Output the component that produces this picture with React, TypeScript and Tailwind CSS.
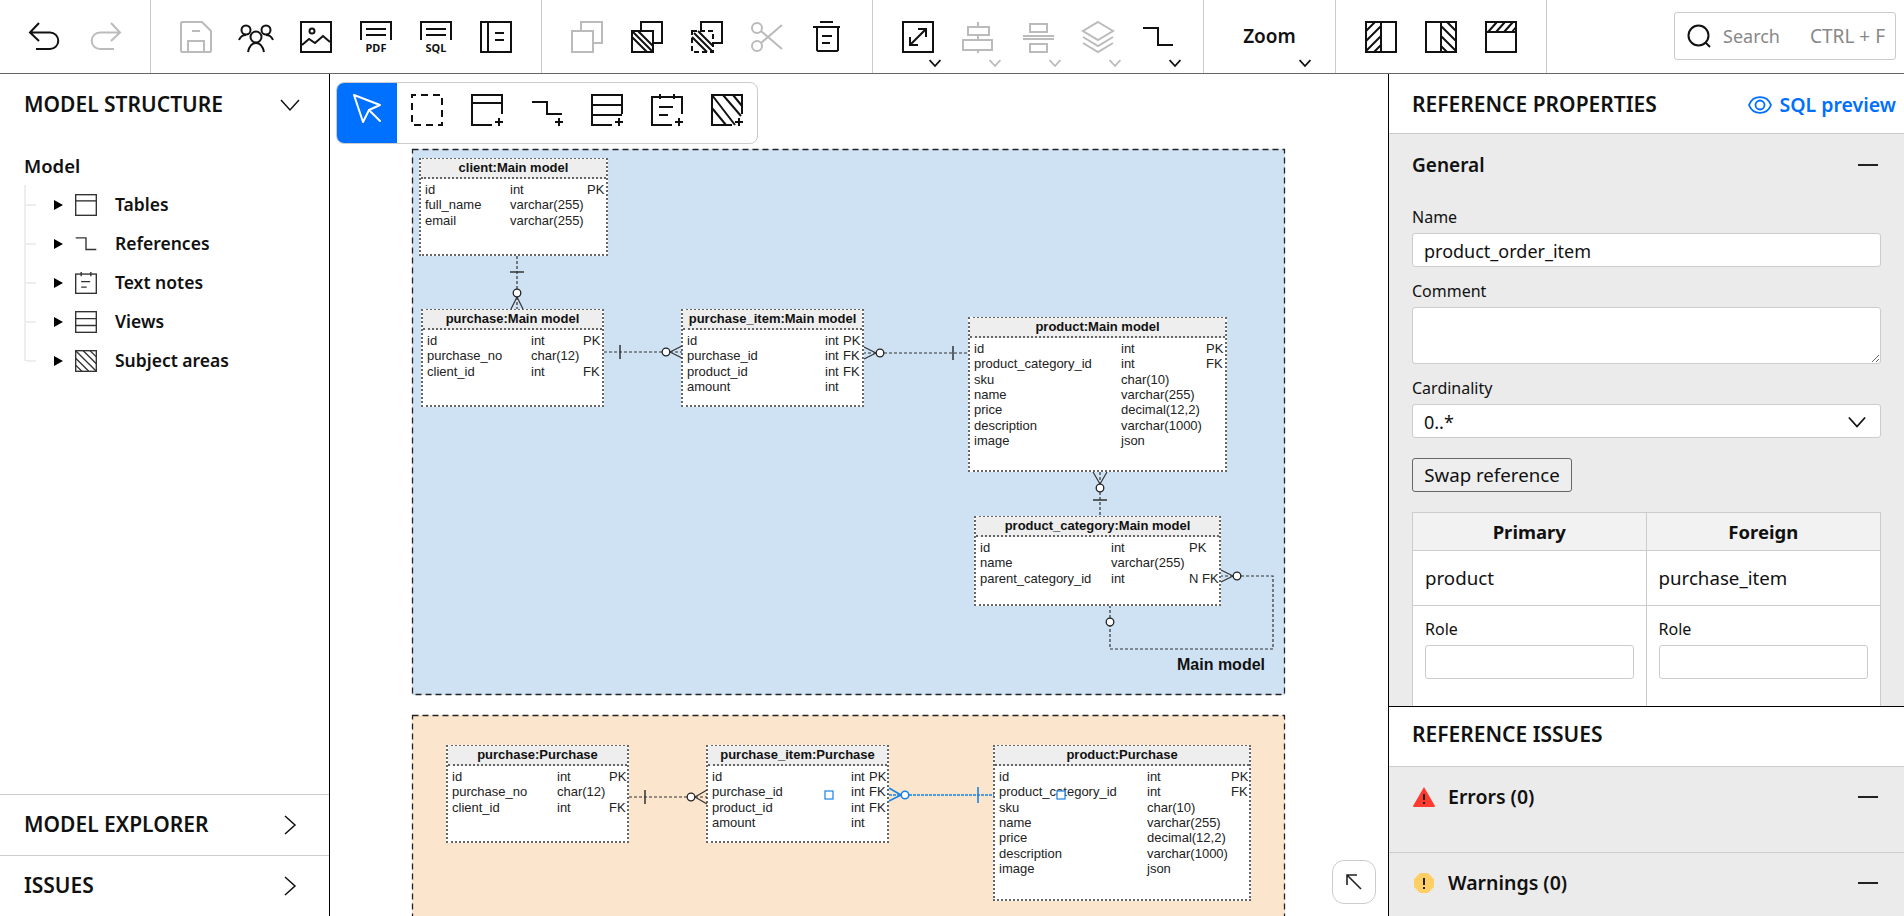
import type { ReactNode } from "react";

const Ico = ({ children, className = "" }: { children: ReactNode; className?: string }) => (
  <svg viewBox="0 0 32 32" fill="none" stroke="currentColor" strokeWidth={2} className={`w-8 h-8 shrink-0 overflow-visible ${className}`}>
    {children}
  </svg>
);

const Chevron = ({ className = "", dir = "down", w = 2 }: { className?: string; dir?: "down" | "right"; w?: number }) => (
  <svg viewBox="0 0 20 20" fill="none" stroke="currentColor" strokeWidth={w} className={className}>
    <path d={dir === "down" ? "M1 5 L10 15 L19 5" : "M5 1 L15 10 L5 19"} />
  </svg>
);

const Hatch = ({ d }: { d: string }) => <path d={d} />;

const Undo = () => <path d="M10 2 L1 11.5 L10 20 M1 11.5 H21 A8.2 8.2 0 0 1 21 28 H7" />;
const Redo = () => <path d="M22 2 L31 11.5 L22 20 M31 11.5 H11 A8.2 8.2 0 0 0 11 28 H25" />;
const SaveI = () => (
  <>
    <path d="M2 1 H22 L31 10 V30 L30 31 H2 L1 30 V2 Z" />
    <path d="M12 10 H20 M8 31 V20 H24 V31" />
  </>
);
const People = () => (
  <>
    <circle cx="6" cy="9" r="4.5" />
    <circle cx="26" cy="9" r="4.5" />
    <path d="M-1 19 Q1 14 6 14 M33 19 Q31 14 26 14" />
    <circle cx="16" cy="16" r="5.5" fill="white" />
    <path d="M8 31 Q10 22 16 22 Q22 22 24 31" />
  </>
);
const ImageI = () => (
  <>
    <rect x="1" y="1" width="30" height="30" />
    <circle cx="12" cy="10" r="2.5" />
    <path d="M2 24 L9 18 L15 22 L23 15 L30 21" />
  </>
);
const DocText = ({ label }: { label: string }) => (
  <>
    <path d="M1 19 V1 H31 V19 M6 8 H26 M6 14 H26" />
    <text x="16" y="31" textAnchor="middle" fontSize="11" fontWeight="700" fill="currentColor" stroke="none" className="font-['Noto_Sans',sans-serif]">
      {label}
    </text>
  </>
);
const Sidebar = () => (
  <>
    <rect x="1" y="1" width="30" height="30" />
    <path d="M8 1 V31 M15 12 H24 M15 19 H24" />
  </>
);
const Copy = () => (
  <>
    <rect x="1" y="10" width="21" height="21" />
    <path d="M10 10 V1 H31 V22 H22" />
  </>
);
const CopyArea = () => (
  <>
    <rect x="1" y="10" width="21" height="21" />
    <path d="M10 10 V1 H31 V22 H22" />
    <Hatch d="M1 16 L16 31 M1 10 L22 31 M7 10 L22 25" />
  </>
);
const CopyAreaDashed = () => (
  <>
    <rect x="1" y="10" width="21" height="21" strokeDasharray="5 3" />
    <path d="M10 10 V1 H31 V22 H22" />
    <Hatch d="M1 16 L16 31 M3 12 L21 30 M7 10 L22 25" />
  </>
);
const Scissors = () => (
  <>
    <circle cx="6" cy="7" r="5" />
    <circle cx="6" cy="25" r="5" />
    <path d="M10 10 L31 28 M10 22 L31 4" />
  </>
);
const Trash = () => (
  <path d="M9 1 H22 M2 6 H29 M6 6 V29 L7 30 H26 L27 29 V6 M11 15 H21 M11 22 H19" />
);
const Resize = () => (
  <>
    <rect x="1" y="1" width="30" height="30" />
    <path d="M8 24 L24 8 M16 8 H24 V16 M8 16 V24 H16" />
  </>
);
const AlignCenter = () => (
  <>
    <rect x="6" y="6" width="21" height="8" />
    <rect x="1" y="19" width="29" height="10" />
    <path d="M16 1 V6 M16 14 V19 M16 29 V32" />
  </>
);
const AlignMiddle = () => (
  <>
    <rect x="8" y="3" width="17" height="8" />
    <rect x="8" y="23" width="17" height="8" />
    <path d="M1 15 H32 M1 18 H32" />
  </>
);
const Layers = () => <path d="M16 1 L31 10 L16 19 L1 10 Z M1 16 L16 25 L31 16 M1 22 L16 31 L31 22" />;
const RefLine = () => <path d="M1 7 H16 V24 H31" />;
const LeftHatch = () => (
  <>
    <rect x="1" y="1" width="30" height="30" />
    <path d="M16 1 V31 M1 10 L10 1 M1 20 L16 5 M1 30 L16 15 M9 31 L16 24" />
  </>
);
const RightHatch = () => (
  <>
    <rect x="1" y="1" width="30" height="30" />
    <path d="M16 1 V31 M22 1 L31 10 M16 5 L31 20 M16 15 L31 30 M16 25 L22 31" />
  </>
);
const TopHatch = () => (
  <>
    <rect x="1" y="1" width="30" height="30" />
    <path d="M1 11 H31 M3 11 L12 1 M11 11 L20 1 M19 11 L28 1 M27 11 L31 6" />
  </>
);
const Plus = () => <path d="M28 24 V32 M24 28 H32" />;

const Cursor = () => (
  <>
    <path d="M3 1 L29 11 L18 16 L12 28 Z" strokeLinejoin="round" />
    <path d="M18 16 L29 27" strokeLinecap="round" />
  </>
);
const DashRect = () => <rect x="1" y="1" width="30" height="30" strokeDasharray="7 5" strokeDashoffset="3" />;
const TableAdd = () => (
  <>
    <path d="M31 20 V1 H1 V31 H21 M1 9 H31" />
    <Plus />
  </>
);
const RefAdd = () => (
  <>
    <path d="M1 8 H16 V20 H31" />
    <Plus />
  </>
);
const ViewAdd = () => (
  <>
    <path d="M31 20 V1 H1 V31 H21 M1 11 H31 M1 21 H31" />
    <Plus />
  </>
);
const NoteAdd = () => (
  <>
    <path d="M31 20 V3 H1 V31 H21 M9 0 V5 M23 0 V5 M8 13 H22 M8 21 H17" />
    <Plus />
  </>
);
const AreaAdd = () => (
  <>
    <path d="M31 20 V1 H1 V31 H21 M1 1 L24 31 M12 1 L30 22 M22 1 L31 12 M1 14 L15 31" />
    <Plus />
  </>
);

const TableI = () => (
  <>
    <rect x="1" y="1" width="30" height="30" />
    <path d="M1 10 H31" />
  </>
);
const NoteI = () => (
  <>
    <rect x="1" y="3" width="30" height="28" />
    <path d="M9 0 V6 M23 0 V6 M9 14 H22 M9 22 H17" />
  </>
);
const ViewI = () => (
  <>
    <rect x="1" y="1" width="30" height="30" />
    <path d="M1 11 H31 M1 21 H31" />
  </>
);
const AreaI = () => (
  <>
    <rect x="1" y="1" width="30" height="30" />
    <path d="M1 1 L31 31 M12 1 L31 20 M1 12 L20 31 M22 1 L31 10 M1 22 L10 31" />
  </>
);

const ToolBtn = ({ children, off, menu }: { children: ReactNode; off?: boolean; menu?: boolean }) => (
  <div className={`relative w-[60px] h-[73px] flex justify-center items-center ${off ? "text-[#bbb]" : "text-[#111]"}`}>
    {children}
    {menu && <Chevron className="absolute left-[41px] top-[57px] w-[12px] h-[12px]" w={3} />}
  </div>
);

const ToolGroup = ({ children }: { children: ReactNode }) => (
  <div className="flex px-[15px] border-r border-[#ccc] h-[73px]">{children}</div>
);

const Header = () => (
  <header className="h-[74px] shrink-0 flex border-b border-[#666] bg-white">
    <ToolGroup>
      <ToolBtn><Ico><Undo /></Ico></ToolBtn>
      <ToolBtn off><Ico><Redo /></Ico></ToolBtn>
    </ToolGroup>
    <ToolGroup>
      <ToolBtn off><Ico><SaveI /></Ico></ToolBtn>
      <ToolBtn><Ico><People /></Ico></ToolBtn>
      <ToolBtn><Ico><ImageI /></Ico></ToolBtn>
      <ToolBtn><Ico><DocText label="PDF" /></Ico></ToolBtn>
      <ToolBtn><Ico><DocText label="SQL" /></Ico></ToolBtn>
      <ToolBtn><Ico><Sidebar /></Ico></ToolBtn>
    </ToolGroup>
    <ToolGroup>
      <ToolBtn off><Ico><Copy /></Ico></ToolBtn>
      <ToolBtn><Ico><CopyArea /></Ico></ToolBtn>
      <ToolBtn><Ico><CopyAreaDashed /></Ico></ToolBtn>
      <ToolBtn off><Ico><Scissors /></Ico></ToolBtn>
      <ToolBtn><Ico><Trash /></Ico></ToolBtn>
    </ToolGroup>
    <ToolGroup>
      <ToolBtn menu><Ico><Resize /></Ico></ToolBtn>
      <ToolBtn off menu><Ico><AlignCenter /></Ico></ToolBtn>
      <ToolBtn off menu><Ico><AlignMiddle /></Ico></ToolBtn>
      <ToolBtn off menu><Ico><Layers /></Ico></ToolBtn>
      <ToolBtn menu><Ico><RefLine /></Ico></ToolBtn>
    </ToolGroup>
    <div className="relative w-[132px] h-[73px] border-r border-[#ccc] flex justify-center items-center text-[19px] font-semibold text-[#111]">
      Zoom
      <Chevron className="absolute left-[95px] top-[57px] w-[12px] h-[12px]" w={3} />
    </div>
    <ToolGroup>
      <ToolBtn><Ico><LeftHatch /></Ico></ToolBtn>
      <ToolBtn><Ico><RightHatch /></Ico></ToolBtn>
      <ToolBtn><Ico><TopHatch /></Ico></ToolBtn>
    </ToolGroup>
    <div className="ml-auto mr-2 mt-3 w-[222px] h-[48px] border border-[#ccc] rounded-[3px] flex items-center pl-[12px] pr-[10px] text-[#888]">
      <svg viewBox="0 0 24 24" fill="none" stroke="#111" strokeWidth={2} className="w-6 h-6 shrink-0">
        <circle cx="11.5" cy="11.5" r="10" />
        <path d="M18.5 18.5 L23 23" />
      </svg>
      <span className="ml-[12px] text-[18px]">Search</span>
      <span className="ml-auto text-[19px]">CTRL + F</span>
    </div>
  </header>
);

const treeItems: { label: string; icon: ReactNode }[] = [
  { label: "Tables", icon: <TableI /> },
  { label: "References", icon: <RefLine /> },
  { label: "Text notes", icon: <NoteI /> },
  { label: "Views", icon: <ViewI /> },
  { label: "Subject areas", icon: <AreaI /> },
];

const LeftPanel = () => (
  <aside className="w-[330px] shrink-0 flex flex-col border-r border-black bg-white text-[#111]">
    <div className="h-[60px] shrink-0 flex items-center justify-between pl-[24px] pr-[29px] pt-[2px]">
      <span className="text-[21px] font-semibold">MODEL STRUCTURE</span>
      <Chevron className="w-[20px] h-[20px]" w={1.5} />
    </div>
    <div className="pl-[24px] mt-[20px] text-[18.5px] leading-[24px] font-semibold">Model</div>
    <ul className="ml-[24px] mt-[7px] h-[176px] border-l-2 border-[#eee]">
      {treeItems.map((item) => (
        <li key={item.label} className="h-[39px] flex items-center">
          <span className="w-[10px] h-[2px] bg-[#eee]" />
          <svg viewBox="0 0 9 10" className="ml-[18px] w-[9px] h-[10px] fill-black">
            <polygon points="0,0 9,5 0,10" />
          </svg>
          <svg viewBox="0 0 32 32" fill="none" stroke="#333" strokeWidth={2} className="ml-[12px] w-[22px] h-[22px] overflow-visible">
            {item.icon}
          </svg>
          <span className="ml-[18px] text-[17.5px] font-semibold">{item.label}</span>
        </li>
      ))}
    </ul>
    <div className="mt-auto">
      {["MODEL EXPLORER", "ISSUES"].map((name) => (
        <div key={name} className="h-[61px] border-t border-[#ccc] flex items-center justify-between pl-[24px] pr-[29px]">
          <span className="text-[21px] font-semibold">{name}</span>
          <Chevron dir="right" className="w-[20px] h-[20px]" w={1.5} />
        </div>
      ))}
    </div>
  </aside>
);

type Row = [string, string, string?];

type Tbl = {
  title: string;
  pos: string;
  cols: string;
  rows: Row[];
};

const productRows: Row[] = [
  ["id", "int", "PK"],
  ["product_category_id", "int", "FK"],
  ["sku", "char(10)"],
  ["name", "varchar(255)"],
  ["price", "decimal(12,2)"],
  ["description", "varchar(1000)"],
  ["image", "json"],
];
const purchaseRows: Row[] = [
  ["id", "int", "PK"],
  ["purchase_no", "char(12)"],
  ["client_id", "int", "FK"],
];
const itemRows: Row[] = [
  ["id", "int", "PK"],
  ["purchase_id", "int", "FK"],
  ["product_id", "int", "FK"],
  ["amount", "int"],
];

const tables: Tbl[] = [
  {
    title: "client:Main model",
    pos: "left-[89px] top-[84px] w-[189px] h-[98px]",
    cols: "grid-cols-[85px_77px_1fr]",
    rows: [
      ["id", "int", "PK"],
      ["full_name", "varchar(255)"],
      ["email", "varchar(255)"],
    ],
  },
  { title: "purchase:Main model", pos: "left-[91px] top-[235px] w-[183px] h-[98px]", cols: "grid-cols-[104px_52px_1fr]", rows: purchaseRows },
  { title: "purchase_item:Main model", pos: "left-[351px] top-[235px] w-[183px] h-[98px]", cols: "grid-cols-[138px_18px_1fr]", rows: itemRows },
  { title: "product:Main model", pos: "left-[638px] top-[243px] w-[259px] h-[155px]", cols: "grid-cols-[147px_85px_1fr]", rows: productRows },
  {
    title: "product_category:Main model",
    pos: "left-[644px] top-[442px] w-[247px] h-[90px]",
    cols: "grid-cols-[131px_78px_1fr]",
    rows: [
      ["id", "int", "PK"],
      ["name", "varchar(255)"],
      ["parent_category_id", "int", "N FK"],
    ],
  },
  { title: "purchase:Purchase", pos: "left-[116px] top-[671px] w-[183px] h-[98px]", cols: "grid-cols-[105px_52px_1fr]", rows: purchaseRows },
  { title: "purchase_item:Purchase", pos: "left-[376px] top-[671px] w-[183px] h-[98px]", cols: "grid-cols-[139px_18px_1fr]", rows: itemRows },
  { title: "product:Purchase", pos: "left-[663px] top-[671px] w-[258px] h-[156px]", cols: "grid-cols-[148px_84px_1fr]", rows: productRows },
];

const ErTable = ({ t }: { t: Tbl }) => (
  <div className={`absolute ${t.pos} bg-white border-2 border-dotted border-[#666]`}>
    <div className="h-[20px] -mt-px bg-[#eee] border-b-2 border-dotted border-[#666] text-center font-bold leading-[18px] text-[#111]">
      {t.title}
    </div>
    <div className="pt-[3px] pl-[4px] leading-[15.35px] text-[#222]">
      {t.rows.map((r) => (
        <div key={r[0]} className={`grid ${t.cols} whitespace-nowrap`}>
          <span>{r[0]}</span>
          <span>{r[1]}</span>
          <span>{r[2]}</span>
        </div>
      ))}
    </div>
  </div>
);

const Connectors = () => (
  <svg viewBox="330 74 1058 842" className="absolute inset-0 w-full h-full pointer-events-none" fill="none" stroke="#333" strokeWidth={1.2}>
    <rect x="412.5" y="149.5" width="872" height="545" stroke="#222" strokeWidth={1.3} strokeDasharray="6 4" />
    <rect x="412.5" y="715.5" width="872" height="300" stroke="#222" strokeWidth={1.3} strokeDasharray="6 4" />
    <g strokeDasharray="3 2">
      <path d="M517 256 V289" />
      <path d="M604 352 H662" />
      <path d="M884 353 H969" />
      <path d="M1100 472 V484 M1100 492 V516" />
      <path d="M1241 576 H1273 V649 H1110 V626 M1110 618 V606" />
      <path d="M629 797 H687" />
      <path d="M517 297 V309 M670 352 H682 M876 353 H864 M1233 576 H1221 M695 797 H707" />
    </g>
    <path d="M510 272 H524 M620 345 V359 M953 346 V360 M1093 500 H1107 M645 790 V804" strokeWidth={1.5} />
    <path d="M517 297 L511 309 M517 297 L523 309 M670 352 L682 346 M670 352 L682 358 M876 353 L864 347 M876 353 L864 359 M1100 484 L1093 472 M1100 484 L1107 472 M1233 576 L1221 570 M1233 576 L1221 582 M695 797 L707 790 M695 797 L707 804" />
    <g fill="white" stroke="#222" strokeWidth={1.3}>
      <circle cx="517" cy="293" r="3.8" />
      <circle cx="666" cy="352" r="3.8" />
      <circle cx="880" cy="353" r="3.8" />
      <circle cx="1100" cy="488" r="3.8" />
      <circle cx="1237" cy="576" r="3.8" />
      <circle cx="1110" cy="622" r="3.8" />
      <circle cx="691" cy="797" r="3.8" />
    </g>
    <g stroke="#1a82e6">
      <path d="M889 795 H994" strokeDasharray="3 1" strokeWidth={1.6} />
      <path d="M978 787 V803 M901 795 L889 788 M901 795 L889 801" strokeWidth={1.6} />
      <circle cx="905" cy="795" r="3.8" fill="white" strokeWidth={1.6} />
      <rect x="825" y="791" width="8" height="8" fill="white" strokeWidth={1.2} />
      <rect x="1057" y="791" width="8" height="8" fill="white" strokeWidth={1.2} />
    </g>
  </svg>
);

const paletteBtn = "w-[60px] h-[60px] flex justify-center pt-[11px] text-[#111]";

const Canvas = () => (
  <main className="relative flex-1 overflow-hidden bg-white font-['Liberation_Sans',Arial,sans-serif] text-[13px]">
    <div className="absolute left-[82px] top-[75px] w-[873px] h-[546px] bg-[#cfe2f3]">
      <span className="absolute right-[20px] bottom-[21px] text-[16px] font-bold leading-[18px] text-[#111]">Main model</span>
    </div>
    <div className="absolute left-[82px] top-[641px] w-[873px] h-[300px] bg-[#fce5cd]" />
    {tables.map((t) => (
      <ErTable key={t.title} t={t} />
    ))}
    <Connectors />
    <div className="absolute left-[6px] top-[8px] flex bg-white border border-[#ccc] rounded-[8px] overflow-hidden font-['Noto_Sans',sans-serif]">
      <div className="w-[60px] h-[60px] flex justify-center pt-[11px] bg-[#0070ff] text-white"><Ico><Cursor /></Ico></div>
      <div className={paletteBtn}><Ico><DashRect /></Ico></div>
      <div className={paletteBtn}><Ico><TableAdd /></Ico></div>
      <div className={paletteBtn}><Ico><RefAdd /></Ico></div>
      <div className={paletteBtn}><Ico><ViewAdd /></Ico></div>
      <div className={paletteBtn}><Ico><NoteAdd /></Ico></div>
      <div className={paletteBtn}><Ico><AreaAdd /></Ico></div>
    </div>
    <div className="absolute left-[1002px] top-[786px] w-[44px] h-[44px] rounded-[12px] border border-[#ccc] bg-white flex items-center justify-center">
      <svg viewBox="0 0 16 16" fill="none" stroke="#222" strokeWidth={1.6} className="w-4 h-4">
        <path d="M1 1 L15 15 M1 11 V1 H11" />
      </svg>
    </div>
  </main>
);

const Minus = () => <span className="block w-[20px] h-[2px] bg-[#222]" />;

const inputCls = "block w-full h-[34px] bg-white border border-[#ccc] rounded-[3px] px-[11px] pt-[2px] text-[18px] text-[#111] outline-none";

const RightPanel = () => (
  <aside className="w-[516px] shrink-0 flex flex-col border-l border-black bg-white text-[#111]">
    <section className="h-[632px] shrink-0 overflow-hidden flex flex-col">
      <div className="h-[60px] shrink-0 border-b border-[#ccc] flex items-center justify-between pl-[23px] pr-2 pt-[2px]">
        <span className="text-[21px] font-semibold">REFERENCE PROPERTIES</span>
        <span className="flex items-center text-[#0070ff] text-[19.5px] font-semibold">
          <svg viewBox="0 0 24 24" fill="none" stroke="currentColor" strokeWidth={1.8} className="w-6 h-6 mr-2">
            <path d="M1 12 C5 1.5 19 1.5 23 12 C19 22.5 5 22.5 1 12 Z" />
            <circle cx="12" cy="12" r="4.5" />
          </svg>
          SQL preview
        </span>
      </div>
      <div className="flex-1 bg-[#ebebeb] pl-[23px] pr-[23px]">
        <div className="h-[62px] flex items-center justify-between pr-[3px]">
          <span className="text-[19px] font-semibold">General</span>
          <Minus />
        </div>
        <label className="block mt-[9px] text-[16px] leading-[24px]">Name</label>
        <input className={`${inputCls} mt-[4px]`} value="product_order_item" readOnly />
        <label className="block mt-[12px] text-[16px] leading-[24px]">Comment</label>
        <textarea className="block w-full h-[57px] mt-[4px] bg-white border border-[#ccc] rounded-[3px]" readOnly />
        <label className="block mt-[12px] text-[16px] leading-[24px]">Cardinality</label>
        <div className={`${inputCls} mt-[4px] flex items-center justify-between`}>
          <span>0..*</span>
          <Chevron className="w-[18px] h-[18px] mr-[3px]" />
        </div>
        <button className="block mt-[20px] w-[160px] h-[34px] pt-[1px] bg-[#eee] border border-[#666] rounded-[3px] text-[18.7px] leading-none">
          Swap reference
        </button>
        <div className="mt-[20px] grid grid-cols-2 border border-[#ccc] bg-white">
          <div className="h-[38px] bg-[#f2f2f2] border-b border-r border-[#ccc] flex items-center justify-center text-[18.5px] font-bold">Primary</div>
          <div className="h-[38px] bg-[#f2f2f2] border-b border-[#ccc] flex items-center justify-center text-[18.5px] font-bold">Foreign</div>
          <div className="h-[55px] border-b border-r border-[#ccc] flex items-center pl-[12px] text-[18.7px]">product</div>
          <div className="h-[55px] border-b border-[#ccc] flex items-center pl-[12px] text-[18.7px]">purchase_item</div>
          <div className="h-[120px] border-r border-[#ccc] px-[12px] pt-[11px]">
            <label className="block text-[16px] leading-[24px]">Role</label>
            <input className={`${inputCls} mt-[4px]`} readOnly />
          </div>
          <div className="h-[120px] px-[12px] pt-[11px]">
            <label className="block text-[16px] leading-[24px]">Role</label>
            <input className={`${inputCls} mt-[4px]`} readOnly />
          </div>
        </div>
      </div>
    </section>
    <section className="flex-1 flex flex-col border-t border-black">
      <div className="h-[60px] shrink-0 border-b border-[#ccc] flex items-center pl-[23px] pb-[3px] text-[21px] font-semibold">REFERENCE ISSUES</div>
      <div className="h-[86px] shrink-0 bg-[#ebebeb] border-b border-[#ccc] pl-[24px] pr-[26px] pt-[15px] flex items-start">
        <div className="h-[30px] w-full flex items-center">
          <svg viewBox="0 0 22 20" className="w-[22px] h-[20px]">
            <path d="M11 0 L22 19 Q22 20 21 20 H1 Q0 20 0 19 Z" fill="#ff3b30" />
            <path d="M10 7 H12 V13 H10 Z M10 15 H12 V17 H10 Z" fill="#222" />
          </svg>
          <span className="ml-[13px] text-[19.5px] font-semibold">Errors (0)</span>
          <span className="ml-auto"><Minus /></span>
        </div>
      </div>
      <div className="flex-1 bg-[#ebebeb] pl-[24px] pr-[26px] pt-[15px]">
        <div className="h-[30px] flex items-center">
          <svg viewBox="0 0 20 20" className="ml-[1px] w-[20px] h-[20px]">
            <polygon points="6,0 14,0 20,6 20,14 14,20 6,20 0,14 0,6" fill="#ffcf66" />
            <path d="M9 5 H11 V12 H9 Z M9 14 H11 V16 H9 Z" fill="#222" />
          </svg>
          <span className="ml-[14px] text-[19.5px] font-semibold">Warnings (0)</span>
          <span className="ml-auto"><Minus /></span>
        </div>
      </div>
    </section>
  </aside>
);

export default function App() {
  return (
    <div className="h-screen w-full flex flex-col overflow-hidden bg-white font-['Noto_Sans',sans-serif]">
      <Header />
      <div className="flex-1 flex min-h-0">
        <LeftPanel />
        <Canvas />
        <RightPanel />
      </div>
    </div>
  );
}
